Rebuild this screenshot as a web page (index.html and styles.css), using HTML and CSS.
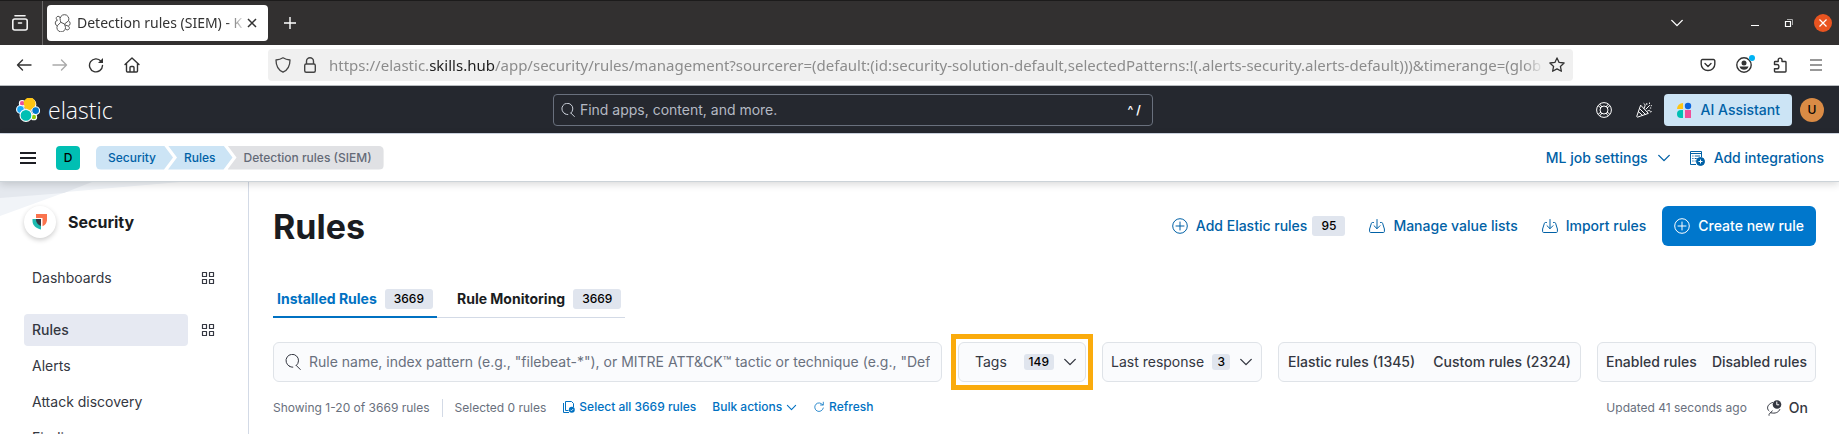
FILE: index.html
```html
<!DOCTYPE html>
<html lang="en">
<head>
<meta charset="utf-8">
<title>Detection rules (SIEM) - Kibana</title>
<link rel="stylesheet" href="styles.css">
</head>
<body>
<svg class="defs" aria-hidden="true">
  <symbol id="chevron" viewBox="0 0 16 16"><path d="M2 5l6 6 6-6" fill="none" stroke="currentColor" stroke-width="1.6" stroke-linecap="round" stroke-linejoin="round"/></symbol>
  <symbol id="search" viewBox="0 0 16 16"><path d="M11.300 11.500l4 4M4.500 12.300A6.300 6.300 0 1 1 11.300 11.500M4.500 12.300c1 .6 2 .9 3.300.9" fill="none" stroke="currentColor" stroke-linecap="round"/></symbol>
  <symbol id="plus" viewBox="0 0 16 16"><path d="M8 4v8M4 8h8" fill="none" stroke="currentColor" stroke-linecap="round"/><circle cx="8" cy="8" r="7.300" fill="none" stroke="currentColor"/></symbol>
  <symbol id="import" viewBox="0 0 16 16"><path d="M8 1.500v9M5 7.700l3 3 3-3M4.500 4.500H3.400c-.5 0-.9.3-1 .8L.6 11v2.500c0 .6.4 1 1 1h12.800c.6 0 1-.4 1-1V11l-1.800-5.700c-.1-.5-.5-.8-1-.8h-1.100" fill="none" stroke="currentColor" stroke-linecap="round" stroke-linejoin="round"/></symbol>
  <symbol id="grid" viewBox="0 0 16 16"><path d="M2.500 2.500h4v4h-4zM9.500 2.500h4v4h-4zM2.500 9.500h4v4h-4zM9.500 9.500h4v4h-4z" fill="none" stroke="currentColor" stroke-width="1.200" stroke-linejoin="round"/></symbol>
</svg>

<div class="tabbar">
  <button class="view" aria-label="Firefox View"><svg width="18" height="18" viewBox="0 0 18 18" fill="none" stroke="#f4f4f4" stroke-width="1.600" stroke-linecap="round"><path d="M4 1.800h10"/><rect x="1.800" y="5" width="14.400" height="11" rx="2"/><path d="M7.500 9h3"/></svg></button>
  <div class="tab">
    <svg width="18" height="18" viewBox="0 0 18 18" fill="none" stroke="#555" stroke-width="1"><path d="M6.300 6.500A4.400 4.400 0 1 1 14.500 6.800L10.500 10 6.800 8.300zM6.200 4A2 2 0 1 0 3.500 6.200M3.500 6.200a2.900 2.900 0 0 0-.2 5.600l3.500-3.500M3.300 11.800a4.300 4.300 0 1 0 8.200 1.500L10.500 10M14.500 6.800a2.900 2.900 0 0 1-.2 5.300l-3.300-1.200M14.300 12.100a2 2 0 1 1-2.800 2.400"/></svg>
    <span class="tab-title">Detection rules (SIEM) - K</span>
    <button class="plain" aria-label="Close tab"><svg width="10" height="10" viewBox="0 0 10 10" stroke="#333" stroke-width="1.500"><path d="M1 1l8 8M9 1L1 9"/></svg></button>
  </div>
  <button class="plain newtab" aria-label="New tab"><svg width="14" height="14" viewBox="0 0 14 14" stroke="#fff" stroke-width="1.400"><path d="M7 1v12M1 7h12"/></svg></button>
  <div class="window-controls">
    <button class="plain alltabs" aria-label="List all tabs"><svg width="14" height="14" viewBox="0 0 16 16" color="#fff"><use href="#chevron"/></svg></button>
    <button class="plain" aria-label="Minimize"><svg width="18" height="18" viewBox="0 0 18 18"><path d="M5 11.500h8" stroke="#fff"/></svg></button>
    <button class="plain" aria-label="Restore"><svg width="18" height="18" viewBox="0 0 18 18" fill="none"><path d="M5.500 7.500h5v5h-5z" stroke="#fff" stroke-width="1.200"/><path d="M7 5.500h5.500V11" stroke="#aaa"/></svg></button>
    <button class="plain" aria-label="Close window"><svg width="18" height="18" viewBox="0 0 18 18"><circle cx="9" cy="9" r="9" fill="#e95420"/><path d="M5.500 5.500l7 7M12.500 5.500l-7 7" stroke="#fff" stroke-width="1.200"/></svg></button>
  </div>
</div>

<div class="toolbar">
  <div class="nav-buttons">
    <button class="plain" aria-label="Back"><svg width="16" height="16" viewBox="0 0 16 16" fill="none" stroke="#333" stroke-width="1.400" stroke-linecap="round" stroke-linejoin="round"><path d="M15 8H1.500M6.500 3l-5 5 5 5"/></svg></button>
    <button class="plain" aria-label="Forward"><svg width="16" height="16" viewBox="0 0 16 16" fill="none" stroke="#aaa" stroke-width="1.400" stroke-linecap="round" stroke-linejoin="round"><path d="M1 8h13.500M9.500 3l5 5-5 5"/></svg></button>
    <button class="plain" aria-label="Reload"><svg width="16" height="16" viewBox="0 0 16 16" fill="none" stroke="#333" stroke-width="1.400" stroke-linecap="round"><path d="M13 4.200A6.500 6.500 0 1 0 14.500 8.500"/><path d="M15 1v5h-5z" fill="#333" stroke="none"/></svg></button>
    <button class="plain" aria-label="Home"><svg width="16" height="16" viewBox="0 0 16 16" fill="none" stroke="#333" stroke-width="1.400" stroke-linecap="round" stroke-linejoin="round"><path d="M1 7.500L8 1l7 6.500M2.500 6.500V14a1 1 0 0 0 1 1h9a1 1 0 0 0 1-1V6.500M6 15v-4.500a1 1 0 0 1 1-1h2a1 1 0 0 1 1 1V15"/></svg></button>
  </div>
  <div class="urlbar">
    <svg width="16" height="16" viewBox="0 0 16 16" fill="none" stroke="#444" stroke-width="1.300" stroke-linejoin="round"><path d="M8 .8c2 1.300 4.200 2 7 2.200 0 6-2.500 10.200-7 12.200C3.500 13.200 1 9 1 3 3.800 2.800 6 2.100 8 .8z"/></svg>
    <svg width="16" height="16" viewBox="0 0 16 16" fill="none" stroke="#444" stroke-width="1.400"><rect x="2.700" y="7" width="10.600" height="8.300" rx="1.500"/><path d="M4.500 7V4.300a3.500 3.500 0 0 1 7 0V7"/></svg>
    <div class="url" role="textbox" aria-label="Address">https://elastic.<b>skills.hub</b>/app/security/rules/management?sourcerer=(default:(id:security-solution-default,selectedPatterns:!(.alerts-security.alerts-default)))&amp;timerange=(glob</div>
    <button class="plain" aria-label="Bookmark"><svg width="16" height="16" viewBox="0 0 16 16" fill="none" stroke="#333" stroke-width="1.300" stroke-linejoin="round"><path d="M8 .9l2.100 4.500 5 .6-3.700 3.400 1 4.900L8 11.900l-4.400 2.400 1-4.900L.9 6l5-.6z"/></svg></button>
  </div>
  <div class="ext-buttons">
    <button class="plain" aria-label="Pocket"><svg width="16" height="16" viewBox="0 0 16 16" fill="none" stroke="#333" stroke-width="1.400" stroke-linecap="round" stroke-linejoin="round"><path d="M2.500 2.500h11a1.300 1.300 0 0 1 1.300 1.300v3.400a6.800 6.300 0 0 1-13.600 0V3.800a1.300 1.300 0 0 1 1.300-1.300zM5 6.500l3 3 3-3"/></svg></button>
    <button class="plain account" aria-label="Account"><svg width="16" height="16" viewBox="0 0 16 16"><circle cx="8" cy="8" r="7.200" fill="none" stroke="#333" stroke-width="1.400"/><circle cx="8" cy="6" r="2.500" fill="#333"/><path d="M3.500 9.500h9c-.6 2.200-2.400 3.300-4.500 3.300s-3.900-1.100-4.500-3.300z" fill="#333"/></svg></button>
    <button class="plain" aria-label="Extensions"><svg width="16" height="16" viewBox="0 0 16 16" fill="none" stroke="#333" stroke-width="1.400" stroke-linejoin="round"><path d="M2.500 7.500V5.200c0-.4.300-.7.700-.7h3V3a1.900 1.900 0 0 1 3.800 0v1.500h3.200c.4 0 .8.300.8.700v9.100c0 .4-.4.700-.8.700H3.200c-.4 0-.7-.3-.7-.7v-2.500h2.300a2.100 2.100 0 0 0 0-4.300z"/></svg></button>
    <button class="plain" aria-label="Menu"><svg width="16" height="16" viewBox="0 0 16 16" stroke="#333" stroke-width="1.200"><path d="M2 3h12M2 8h12M2 13h12"/></svg></button>
  </div>
</div>

<header class="global">
  <a class="brand" href="#"><svg width="24" height="24" viewBox="0 0 32 32" stroke="#fff" stroke-width="1.500"><circle cx="18.700" cy="8.500" r="7.700" fill="#fec514"/><circle cx="8.200" cy="7" r="3.700" fill="#f04e98"/><circle cx="6" cy="15.200" r="5.200" fill="#1ba9f5"/><circle cx="26.200" cy="16.800" r="5.200" fill="#0077cc"/><circle cx="23.800" cy="25.300" r="3.700" fill="#93c90e"/><circle cx="13.300" cy="23.200" r="7.900" fill="#00bfb3"/><path d="M11.500 13.200l7.300 3.200 5.500-4.700a7.700 7.700 0 1 0-13.200-1.500z" fill="#fec514" stroke="none"/></svg><span>elastic</span></a>
  <label class="global-search"><svg width="14" height="14" color="#dfe5ef"><use href="#search"/></svg><input type="text" placeholder="Find apps, content, and more." aria-label="Find apps, content, and more"><span>^ /</span></label>
  <div class="global-actions">
    <button class="plain" aria-label="Help"><svg width="16" height="16" viewBox="0 0 16 16" fill="none" stroke="#fff"><circle cx="8" cy="8" r="7.400"/><circle cx="8" cy="8" r="4"/><path d="M2.200 3.800L5 6M3.800 2.200L6 5M13.800 3.800L11 6M12.200 2.200L10 5M2.200 12.200L5 10M3.800 13.800L6 11M13.800 12.200L11 10M12.200 13.800L10 11"/></svg></button>
    <button class="plain" aria-label="What's new"><svg width="16" height="16" viewBox="0 0 16 16" fill="none" stroke="#fff" stroke-linecap="round" stroke-linejoin="round"><path d="M4.500 3.500L.8 14.200c-.2.600.3 1.100.9.900L12 11.500zM3.500 6.500l6 6M2.300 9.500l4.300 4M8 6.500l1-2.500c.3-1-.2-2-1-2.500M10 7l3.500-3.500M13.500 1v.5M10.800 1.500v1M15.300 3.500v.3M11.500 9c1.300-1 2.600-.8 2.600.2s1 1.300 1.400.5M14.300 6h.5"/></svg></button>
    <button class="assistant"><svg width="16" height="16" viewBox="0 0 16 16"><path d="M1 7a6 6 0 0 1 6-6v6z" fill="#fec514"/><circle cx="12" cy="4" r="3.200" fill="#0b64dd"/><path d="M7 8v8H5a4 4 0 0 1 0-8z" fill="#00bfb3"/><path d="M9 8h6v8H9z" fill="#f04e98"/></svg>AI Assistant</button>
    <button class="avatar user" aria-label="User menu">U</button>
  </div>
</header>

<div class="crumbbar">
  <button class="plain" aria-label="Toggle navigation"><svg width="16" height="16" viewBox="0 0 16 16" stroke="#1d1e24" stroke-width="1.800"><path d="M0 3h16M0 8h16M0 13h16"/></svg></button>
  <button class="avatar space" aria-label="Default space">D</button>
  <nav class="crumbs" aria-label="Breadcrumbs"><a href="#">Security</a><a href="#">Rules</a><span>Detection rules (SIEM)</span></nav>
  <div class="crumb-actions">
    <button class="link">ML job settings<svg width="14" height="14"><use href="#chevron"/></svg></button>
    <a class="link" href="#"><svg width="16" height="16" viewBox="0 0 16 16" fill="none" stroke="currentColor"><path d="M7 14.500H1.500v-13h11V7M1.500 3.500h11"/><path d="M3.300 6h1.200M5.700 6H11M3.300 8.500h1.200M5.700 8.500h2M3.300 11h1.200M5.700 11h1"/><circle cx="11.500" cy="11.500" r="4" fill="currentColor"/><path d="M11.500 9.500v4M9.500 11.500h4" stroke="#fff"/></svg>Add integrations</a>
  </div>
</div>

<div class="layout">
  <aside class="sidebar">
    <svg class="facets" width="180" height="34" viewBox="0 0 180 34"><path d="M0 0h180L66 10 0 34z" fill="#f1f4f8"/><path d="M0 0h92L64 11 0 16z" fill="#e4e8ee"/></svg>
    <div class="solution">
      <span class="solution-logo"><svg width="16" height="16" viewBox="0 0 32 32"><path d="M8 0h22v12.500a15 15 0 0 1-9 12V8H8z" fill="#fa744e"/><path d="M1 10h17v21C8 29 1 22 1 14z" fill="#1dbab0"/><path d="M8 10h10v14C12 22 8 17 8 12z" fill="#343741"/></svg></span>
      <strong>Security</strong>
    </div>
    <nav aria-label="Security">
      <div class="nav-row spaced"><a href="#">Dashboards</a><button class="plain" aria-label="Open Dashboards panel"><svg width="16" height="16"><use href="#grid"/></svg></button></div>
      <div class="nav-row"><a class="current" href="#">Rules</a><button class="plain" aria-label="Open Rules panel"><svg width="16" height="16"><use href="#grid"/></svg></button></div>
      <div class="nav-row"><a href="#">Alerts</a></div>
      <div class="nav-row"><a href="#">Attack discovery</a></div>
      <div class="nav-row"><a href="#">Findings</a></div>
    </nav>
  </aside>

  <main>
    <div class="page-head">
      <h1>Rules</h1>
      <div class="page-actions">
        <a class="link" href="#"><svg width="16" height="16"><use href="#plus"/></svg><span>Add Elastic rules</span><span class="badge close">95</span></a>
        <button class="link"><svg width="16" height="16"><use href="#import"/></svg>Manage value lists</button>
        <button class="link"><svg width="16" height="16"><use href="#import"/></svg>Import rules</button>
        <a class="primary" href="#"><svg width="16" height="16"><use href="#plus"/></svg>Create new rule</a>
      </div>
    </div>

    <nav class="tabs" aria-label="Rule views">
      <a class="selected" href="#">Installed Rules<span class="badge">3669</span></a>
      <a href="#">Rule Monitoring<span class="badge">3669</span></a>
    </nav>

    <div class="filters">
      <label class="rule-search"><svg width="16" height="16"><use href="#search"/></svg><input type="text" aria-label="Search rules" placeholder="Rule name, index pattern (e.g., &quot;filebeat-*&quot;), or MITRE ATT&amp;CK™ tactic or technique (e.g., &quot;Defense Evasion&quot; or &quot;TA0005&quot;)"></label>
      <div class="highlight"><button class="filter tags">Tags<span class="count">149</span><svg width="14" height="14"><use href="#chevron"/></svg></button></div>
      <button class="filter response">Last response<span class="count">3</span><svg width="14" height="14"><use href="#chevron"/></svg></button>
      <div class="filter pair wide"><button>Elastic rules (1345)</button><button>Custom rules (2324)</button></div>
      <div class="filter pair"><button>Enabled rules</button><button>Disabled rules</button></div>
    </div>

    <div class="utility">
      <span class="showing">Showing 1-20 of 3669 rules</span>
      <span class="chosen">Selected 0 rules</span>
      <button class="small"><svg width="12" height="12" viewBox="0 0 12 12" fill="none" stroke="currentColor"><path d="M5.500 9.500h-3v-9h6l2 2V6M.5 2v9.500h5.500"/><circle cx="8.800" cy="8.800" r="3" fill="currentColor" stroke="none"/><path d="M7.500 8.800l1 1 1.700-1.800" stroke="#fff" stroke-width=".8"/></svg>Select all 3669 rules</button>
      <button class="small">Bulk actions<svg width="11" height="11"><use href="#chevron"/></svg></button>
      <button class="small"><svg width="12" height="12" viewBox="0 0 12 12" fill="none" stroke="currentColor" stroke-width=".8" stroke-linecap="round"><path d="M9.800 4A4.300 4.300 0 1 0 10.300 7M10.300 1.200V4H7.500"/></svg>Refresh</button>
      <span class="updated">Updated 41 seconds ago</span>
      <button class="auto"><svg width="16" height="16" viewBox="0 0 16 16" fill="none" stroke="currentColor" stroke-linecap="round"><path d="M6.500 2.500C3 3.500.8 6.500 1.800 9.200c.2.700.7 1.300 1.200 1.700M13.800 9.500c-1 2.700-4.500 4.500-9.300 3.200L6.300 11M4.500 12.700c-1 .6-1.700 1.200-1.500 2.600"/><circle cx="11" cy="4.500" r="4.300" fill="currentColor" stroke="none"/><path d="M10.800 2v2.800h2" stroke="#fff"/></svg>On</button>
    </div>
  </main>
</div>
</body>
</html>
```
FILE: styles.css
```css
* { box-sizing: border-box; }
html, body { height: 100%; }
body {
  margin: 0;
  display: flex;
  flex-direction: column;
  overflow: hidden;
  background: #fff;
  color: #343741;
  font: 14px/20px Inter, "Liberation Sans", sans-serif;
}
button, input { font: inherit; color: inherit; }
button { margin: 0; padding: 0; border: 0; background: none; white-space: nowrap; }
a { color: inherit; text-decoration: none; white-space: nowrap; }
input { min-width: 0; border: 0; padding: 0; background: none; outline: none; }
svg { display: block; flex: none; }
.defs { position: absolute; width: 0; height: 0; }
.plain { display: flex; flex: none; }

/* Browser window */
.tabbar {
  flex: none;
  display: flex;
  align-items: center;
  height: 45px;
  background: #323030;
  border-top: 1px solid #1c1b1b;
  font-family: "Noto Sans", sans-serif;
}
.view { display: flex; align-items: center; height: 100%; padding: 0 13px 0 11px; border-right: 1px solid #6a6868; }
.tab {
  display: flex;
  align-items: center;
  width: 221px;
  height: 36px;
  margin-left: 4px;
  padding: 0 11px 0 7px;
  background: #fff;
  border-radius: 4px;
  color: #333;
}
.tab-title {
  flex: 1;
  margin: 0 1px 0 5px;
  overflow: hidden;
  white-space: nowrap;
  mask-image: linear-gradient(to left, transparent, #000 20px);
}
.newtab { margin-left: 15px; }
.window-controls { display: flex; align-items: center; gap: 16px; margin-left: auto; padding-right: 7px; }
.alltabs { margin-right: 46px; }
.toolbar {
  flex: none;
  display: flex;
  align-items: center;
  height: 41px;
  border-bottom: 1px solid #b8bcc0;
  font: 15px/20px "Noto Sans", sans-serif;
}
.nav-buttons { display: flex; gap: 20px; padding-left: 16px; }
.urlbar {
  flex: 1;
  min-width: 0;
  display: flex;
  align-items: center;
  gap: 11px;
  height: 32px;
  margin: 0 127px 0 128px;
  padding: 0 8px 0 7px;
  background: #f0f0f0;
  border-radius: 4px;
}
.url {
  flex: 1;
  overflow: hidden;
  margin-right: -6px;
  white-space: nowrap;
  color: #8c8c8c;
  mask-image: linear-gradient(to left, transparent, #000 20px);
}
.url b { font-weight: 400; color: #222; }
.ext-buttons { display: flex; gap: 20px; padding-right: 15px; }
.account { position: relative; }
.account::after { content: ""; position: absolute; top: -2px; right: -3px; width: 6px; height: 6px; border-radius: 50%; background: #00b3f4; }

/* Elastic header */
.global {
  flex: none;
  display: grid;
  grid-template-columns: 4fr 600px 5fr;
  align-items: center;
  height: 48px;
  padding: 0 15px 0 16px;
  background: #25282f;
  border-bottom: 1px solid #d3dae6;
}
.brand { display: flex; align-items: center; gap: 8px; color: #fff; font: 300 23px/24px "Open Sans", sans-serif; }
.global-search {
  display: flex;
  align-items: center;
  gap: 5px;
  height: 32px;
  padding: 0 11px 0 7px;
  border: 1px solid #69707d;
  border-radius: 4px;
  color: #fff;
}
.global-search input { flex: 1; }
.global-search input::placeholder { color: #b4b9c3; opacity: 1; }
.global-search span { font-size: 12px; font-weight: 600; }
.global-actions { display: flex; align-items: center; justify-content: flex-end; gap: 24px; }
.assistant {
  display: flex;
  align-items: center;
  gap: 9px;
  height: 32px;
  margin: 0 -16px 0 -12px;
  padding: 0 12px;
  border-radius: 4px;
  background: #cce4f5;
  color: #0061a6;
  font-weight: 500;
}
.avatar { width: 24px; height: 24px; flex: none; color: #000; font-size: 12px; font-weight: 500; }
.user { border-radius: 50%; background: #da8b45; }
.crumbbar {
  position: relative;
  z-index: 1;
  flex: none;
  display: flex;
  align-items: center;
  height: 48px;
  padding: 0 15px 0 20px;
  background: #fff;
  border-bottom: 1px solid #ccd3d8;
  box-shadow: 0 2px 8px rgba(0, 0, 0, .16);
}
.space { margin: 0 16px 0 20px; border-radius: 4px; background: #00bfb3; }
.crumbs { display: flex; font-size: 12px; line-height: 24px; font-weight: 500; }
.crumbs > * {
  margin-left: -5px;
  padding: 0 17px 0 16px;
  background: #cce4f5;
  color: #0061a6;
  clip-path: polygon(0 0, calc(100% - 9px) 0, 100% 50%, calc(100% - 9px) 100%, 0 100%, 9px 50%);
}
.crumbs > :first-child {
  margin-left: 0;
  padding-left: 12px;
  border-radius: 5px 0 0 5px;
  clip-path: polygon(0 0, calc(100% - 9px) 0, 100% 50%, calc(100% - 9px) 100%, 0 100%);
}
.crumbs > :last-child {
  padding-right: 12px;
  border-radius: 0 5px 5px 0;
  background: #e0e1e4;
  color: #646a77;
  clip-path: polygon(0 0, 100% 0, 100% 100%, 0 100%, 9px 50%);
}
.crumb-actions { display: flex; gap: 18px; margin-left: auto; }
.link { display: flex; align-items: center; gap: 8px; color: #0061a6; font-weight: 500; }
.crumb-actions .link { gap: 9px; }

/* Page */
.layout { flex: 1; min-height: 0; display: flex; }
.sidebar { position: relative; flex: none; width: 249px; padding: 24px 0 0 24px; border-right: 1px solid #d3dae6; }
.facets { position: absolute; top: 0; left: 0; }
.solution { position: relative; display: flex; align-items: center; gap: 12px; margin-bottom: 24px; color: #1a1c21; font-size: 16px; }
.solution-logo { display: grid; place-items: center; width: 32px; height: 32px; border-radius: 50%; background: #fff; box-shadow: 0 2px 5px rgba(0, 0, 0, .2); }
.nav-row { display: flex; align-items: center; gap: 12px; margin-bottom: 4px; }
.nav-row.spaced { margin-bottom: 20px; }
.nav-row a { width: 164px; padding: 6px 8px; border-radius: 4px; }
.nav-row a.current { background: #e6e9f2; font-weight: 500; }
main { flex: 1; min-width: 0; padding: 24px 23px 0 24px; }
.page-head { display: flex; align-items: flex-start; justify-content: space-between; }
h1 { margin: 0; color: #1a1c21; font-size: 34px; line-height: 42px; font-weight: 700; }
.page-actions { display: flex; align-items: center; gap: 24px; }
.badge {
  padding: 0 9px;
  border-radius: 3px;
  background: #e0e5ee;
  color: #000;
  font-size: 12px;
  line-height: 20px;
  font-weight: 500;
}
.badge.close { margin-left: -3px; }
.primary {
  display: flex;
  align-items: center;
  gap: 8px;
  height: 40px;
  margin-left: -8px;
  padding: 0 12px;
  border-radius: 6px;
  background: #0077cc;
  color: #fff;
  font-weight: 500;
}
.tabs { display: flex; width: max-content; margin: 30px 0 24px; box-shadow: inset 0 -1px #d3dae6; }
.tabs a { display: flex; align-items: center; gap: 8px; height: 40px; padding: 2px 4px 0; color: #1a1c21; font-weight: 700; }
.tabs a + a { margin-left: 16px; }
.tabs .selected { color: #0071c2; box-shadow: inset 0 -2px #0071c2; }
.filters { display: flex; gap: 16px; color: #343741; }
.rule-search, .filter {
  display: flex;
  align-items: center;
  height: 40px;
  border: 1px solid #dfe3e8;
  border-radius: 6px;
  background: #fafbfd;
}
.rule-search { flex: 1; min-width: 0; gap: 8px; padding: 0 11px; }
.rule-search input { flex: 1; }
.rule-search input::placeholder { color: #69707d; opacity: 1; }
.highlight { position: relative; }
.highlight::after { content: ""; position: absolute; inset: -8px -7px; border: 5px solid #faab0c; pointer-events: none; }
.tags { width: 128px; padding: 0 8px 0 16px; }
.response { width: 160px; padding: 0 8px; }
.filter svg { margin-left: 9px; }
.count { margin-left: auto; min-width: 16px; padding: 0 5px; border-radius: 3px; background: #e0e5ee; color: #000; font-size: 12px; line-height: 16px; font-weight: 500; }
.pair { justify-content: space-between; width: 219px; padding: 0 8px; font-weight: 500; }
.pair.wide { width: 303px; padding: 0 9px; }
.utility { display: flex; align-items: center; margin-top: 16px; color: #69707d; font-size: 12px; line-height: 18px; white-space: nowrap; }
.showing { padding-right: 12px; border-right: 1px solid #d3dae6; }
.chosen { padding: 0 17px 0 12px; }
.small { display: flex; align-items: center; gap: 4px; margin: 0 16px 2px 0; color: #0071c2; font-weight: 500; }
.updated { margin-left: auto; }
.auto { display: flex; align-items: center; gap: 7px; margin: 0 8px 0 19px; color: #343741; font-size: 14px; font-weight: 500; }
```
